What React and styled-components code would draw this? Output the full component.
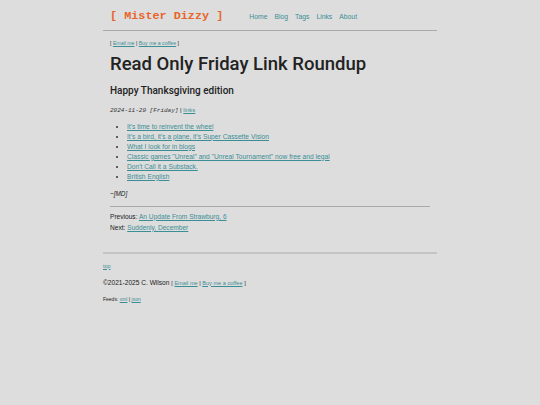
import React from 'react'
import styled, { createGlobalStyle } from 'styled-components'

const links = [
  "It's time to reinvent the wheel",
  "It's a bird, it's a plane, it's Super Cassette Vision",
  'What I look for in blogs',
  'Classic games "Unreal" and "Unreal Tournament" now free and legal',
  "Don't Call it a Substack.",
  'British English',
]

const nav = ['Home', 'Blog', 'Tags', 'Links', 'About']

const App = () => {
  return (
    <>
      <GlobalStyle />
      <Page>
        <Header>
          <SiteTitle>[ Mister Dizzy ]</SiteTitle>
          <Nav>
            {nav.map((item) => (
              <NavLink key={item} href="#">{item}</NavLink>
            ))}
          </Nav>
        </Header>

        <Main>
          <TopLinks>
            [ <A href="#">Email me</A> | <A href="#">Buy me a coffee</A> ]
          </TopLinks>

          <Title>Read Only Friday Link Roundup</Title>
          <Subtitle>Happy Thanksgiving edition</Subtitle>

          <DateLine>
            <Mono>2024-11-29 [Friday]</Mono> | <A href="#">links</A>
          </DateLine>

          <List>
            {links.map((l) => (
              <li key={l}>
                <A href="#">{l}</A>
              </li>
            ))}
          </List>

          <Sign>~[MD]</Sign>
          <Rule />

          <PrevNext>
            <div>Previous: <A href="#">An Update From Strawburg, 6</A></div>
            <div>Next: <A href="#">Suddenly, December</A></div>
          </PrevNext>
        </Main>

        <Footer>
          <TopLink href="#">top</TopLink>
          <Copy>
            ©2021-2025 C. Wilson <Small>[ <A href="#">Email me</A> | <A href="#">Buy me a coffee</A> ]</Small>
          </Copy>
          <Feeds>
            Feeds: <A href="#">xml</A> | <A href="#">json</A>
          </Feeds>
        </Footer>
      </Page>
    </>
  )
}

export default App

const GlobalStyle = createGlobalStyle`
  html, body {
    margin: 0;
    padding: 0;
    background: #dddddd;
  }
  body {
    font-family: "Liberation Sans", Arial, sans-serif;
    color: #222;
    min-height: 405px;
  }
`

const Page = styled.div`
  width: 334px;
  margin: 0 auto;
`

const Header = styled.header`
  display: flex;
  align-items: center;
  height: 31px;
  box-sizing: border-box;
  padding: 2px 7px 0;
  border-bottom: 1px solid #a9a9a9;
`

const SiteTitle = styled.div`
  font-family: "Liberation Mono", "Courier New", monospace;
  font-weight: bold;
  font-size: 11.8px;
  color: #e8652b;
  white-space: pre;
`

const Nav = styled.nav`
  display: flex;
  gap: 7px;
  margin-left: 26px;
`

const NavLink = styled.a`
  font-size: 6.8px;
  color: #3b8e95;
  text-decoration: none;
`

const A = styled.a`
  color: #3b8e95;
  text-decoration: underline;
`

const Main = styled.main`
  padding: 0 7px;
`

const TopLinks = styled.div`
  margin-top: 8px;
  font-size: 5.2px;
  line-height: 8px;
`

const Title = styled.h1`
  margin: 7px 0 0;
  font-family: Roboto, "Liberation Sans", sans-serif;
  font-size: 18.5px;
  line-height: 21.6px;
  font-weight: 500;
  color: #222;
`

const Subtitle = styled.h2`
  margin: 9px 0 0;
  font-family: Roboto, "Liberation Sans", sans-serif;
  font-size: 10px;
  line-height: 12px;
  font-weight: 500;
  color: #222;
`

const DateLine = styled.div`
  margin-top: 9px;
  font-size: 6px;
  line-height: 8px;
`

const Mono = styled.span`
  font-family: "Liberation Mono", "Courier New", monospace;
  font-style: italic;
  color: #333;
`

const List = styled.ul`
  margin: 7px 0 0;
  padding-left: 17px;
  font-size: 6.7px;
  line-height: 10px;

  li::marker {
    color: #333;
  }
`

const Sign = styled.div`
  margin-top: 8px;
  font-size: 6.4px;
  line-height: 8px;
  font-style: italic;
  font-weight: normal;
`

const Rule = styled.hr`
  margin: 8px 0 0;
  border: 0;
  height: 1px;
  background: #a9a9a9;
`

const PrevNext = styled.div`
  margin-top: 4px;
  font-size: 6.6px;
  line-height: 11px;
`

const Footer = styled.footer`
  margin-top: 19px;
  border-top: 2px solid #c4c4c4;
`

const TopLink = styled(A)`
  display: block;
  margin-top: 9px;
  font-size: 5.4px;
  line-height: 7px;
`

const Copy = styled.div`
  margin-top: 9px;
  font-size: 6.6px;
  line-height: 8px;
`

const Small = styled.span`
  font-size: 5.6px;
`

const Feeds = styled.div`
  margin-top: 9px;
  font-size: 5px;
  line-height: 7px;
`
